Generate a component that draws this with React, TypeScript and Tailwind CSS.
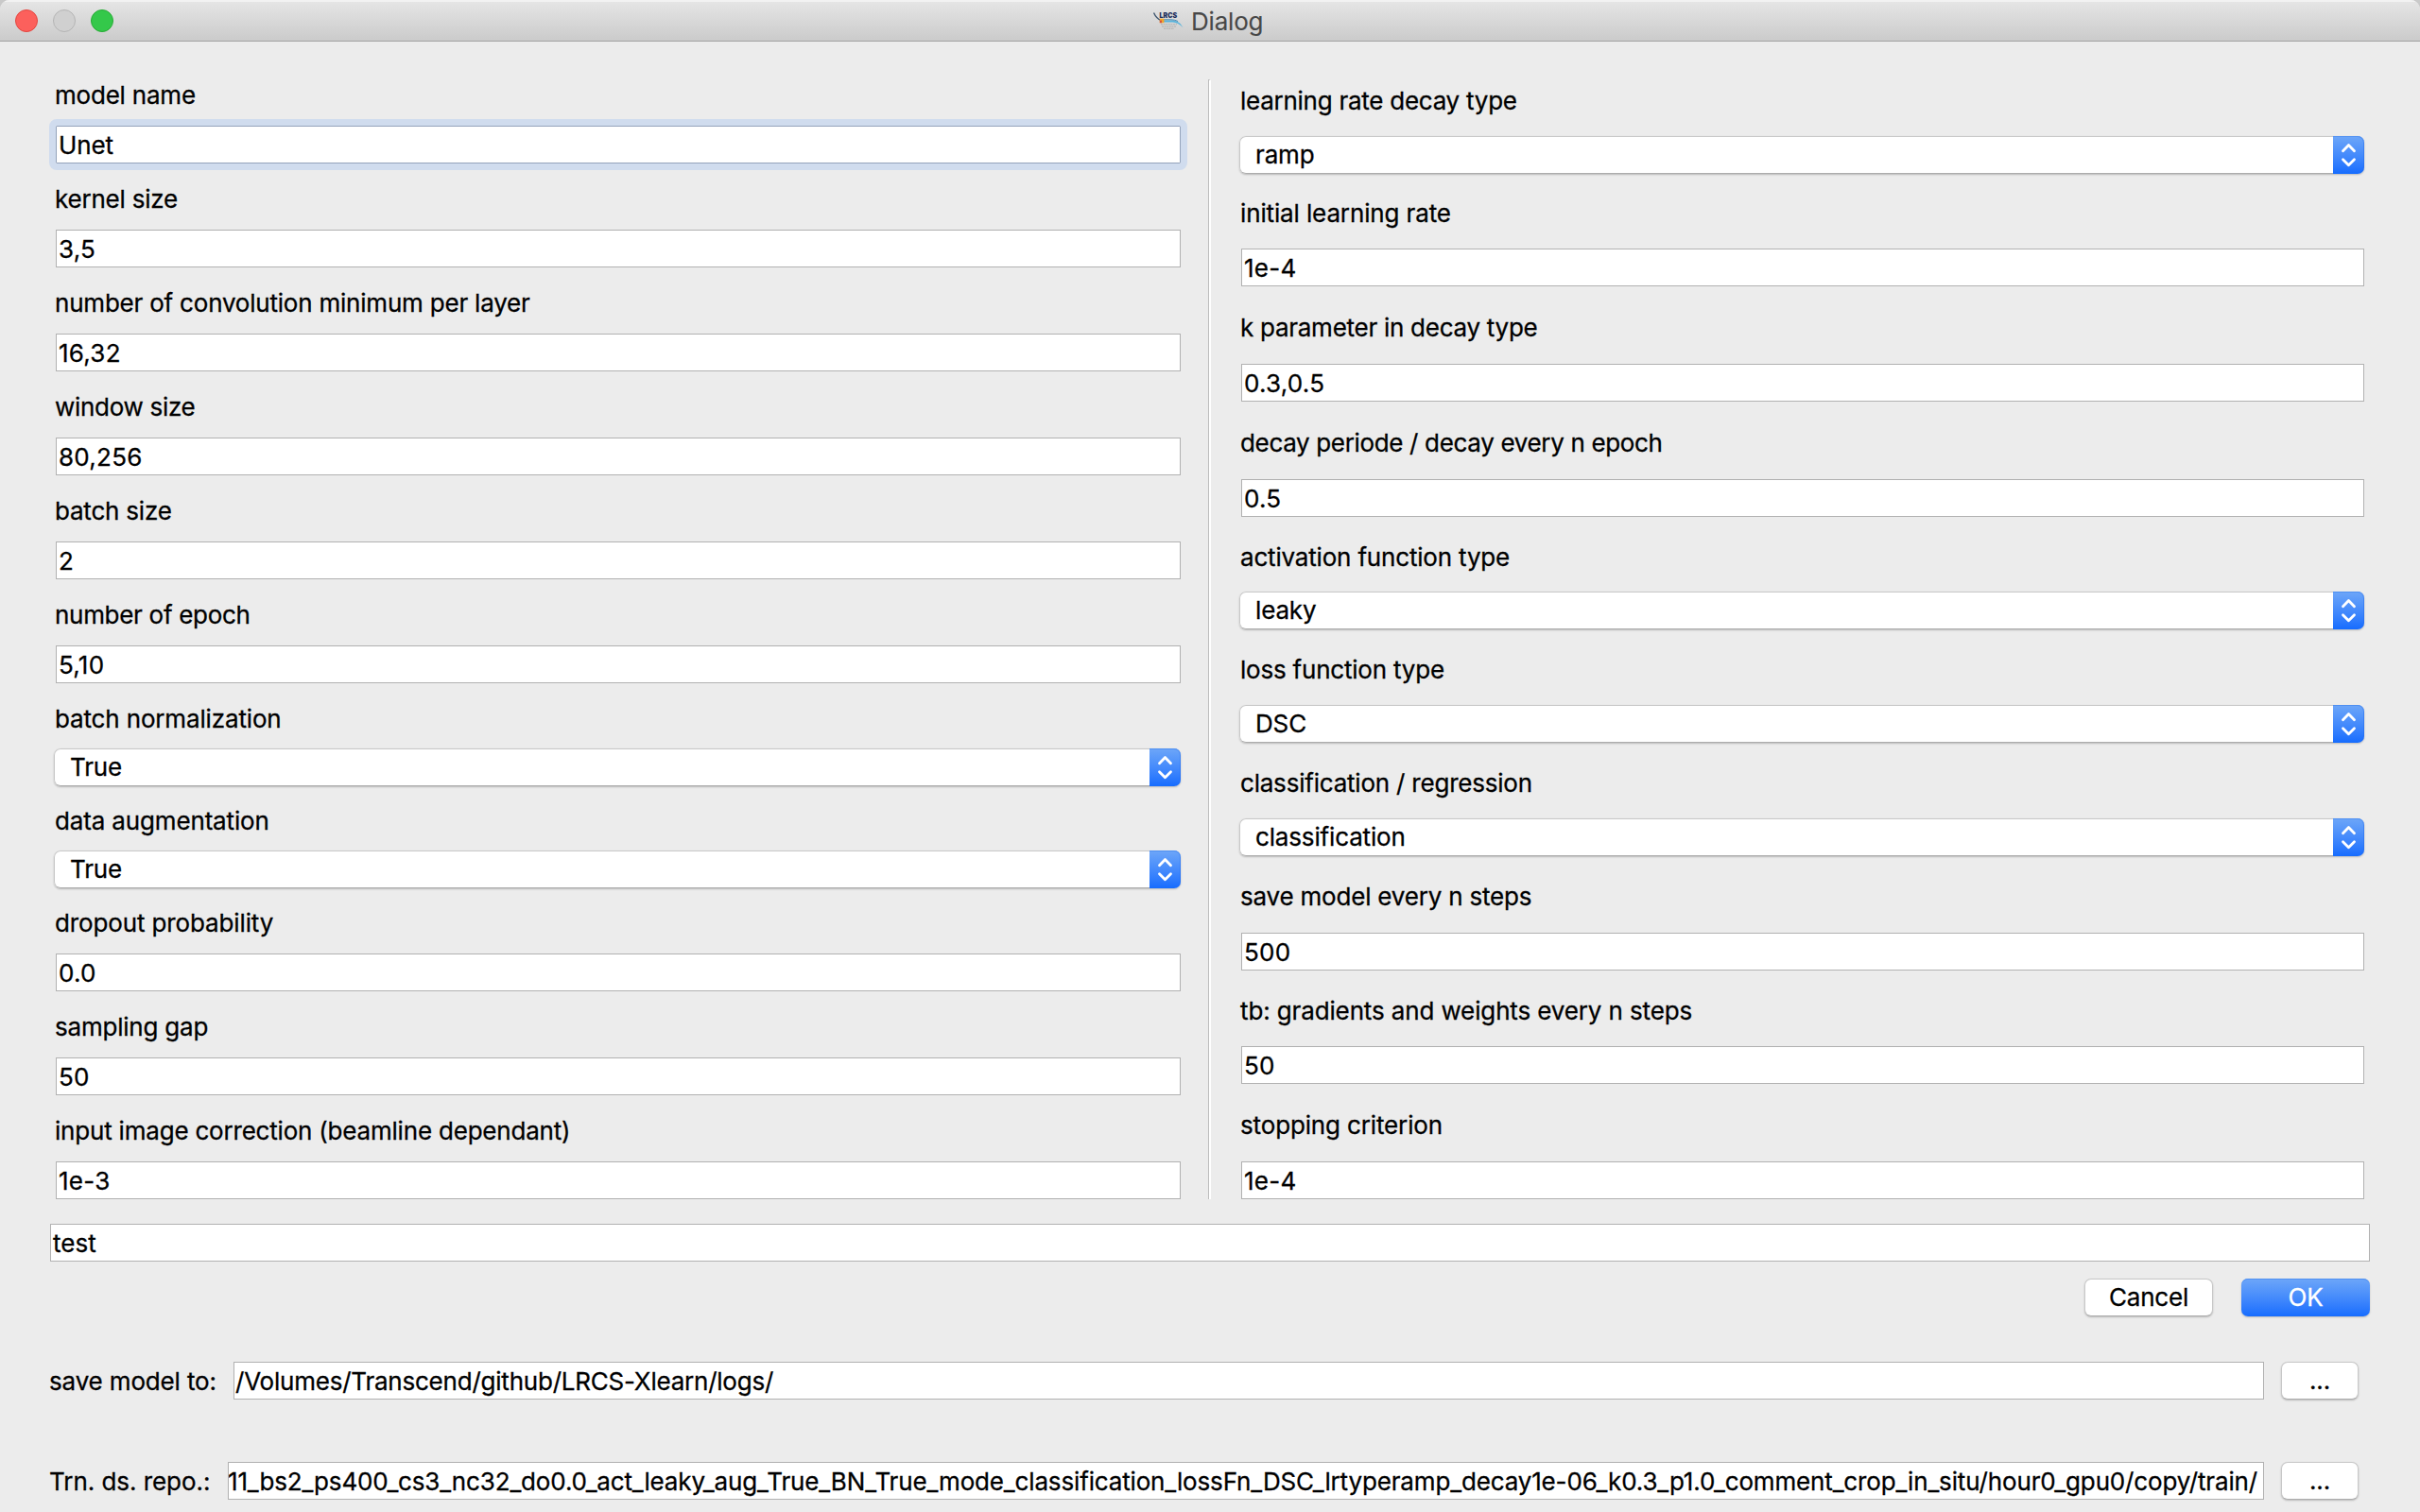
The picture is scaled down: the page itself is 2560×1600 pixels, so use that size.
import type { ReactNode } from "react";

type FieldProps = {
  label: string;
  value: string;
  kind?: "input" | "select";
  /** Spacing above the label. */
  above?: string;
  /** Spacing between label and control. */
  between?: string;
  labelTracking?: string;
  focused?: boolean;
};

function TextInput({ children, className = "" }: { children: ReactNode; className?: string }) {
  return (
    <div
      className={`h-10 overflow-hidden border bg-white pt-1 leading-8 whitespace-nowrap ${className}`}
    >
      {children}
    </div>
  );
}

function Select({ value }: { value: string }) {
  return (
    <div className="-ml-0.5 flex h-10 rounded-[7px] bg-white tracking-[-0.15px] shadow-[0_1px_2px_rgba(0,0,0,0.22)]">
      <div className="flex-1 rounded-l-[7px] border border-r-0 border-[#c8c8c8] border-b-[#acacac] pt-[3px] pl-4 leading-8">
        {value}
      </div>
      <div className="h-10 w-[33px] rounded-r-[7px] bg-linear-to-b from-[#6da6f8] to-[#156cfe] shadow-[inset_0_1px_0_#4f90f2,inset_-1px_0_0_rgba(30,105,235,0.45)]">
        <svg width="33" height="40" viewBox="0 0 33 40" fill="none" stroke="white" strokeWidth="2.8" strokeLinecap="round" strokeLinejoin="round">
          <path d="M10.5 15.7 16.5 9.6 22.5 15.7" />
          <path d="M10.5 24.7 16.5 30.8 22.5 24.7" />
        </svg>
      </div>
    </div>
  );
}

function Field({
  label,
  value,
  kind = "input",
  above = "",
  between = "mt-4",
  labelTracking = "tracking-[-0.21px]",
  focused = false,
}: FieldProps) {
  return (
    <div className={above}>
      <div className={`-ml-px h-8 leading-8 whitespace-nowrap ${labelTracking}`}>{label}</div>
      <div className={between}>
        {kind === "select" ? (
          <Select value={value} />
        ) : (
          <TextInput
            className={
              focused
                ? "rounded-[1px] border-[#94a3bb] pl-0.5 tracking-[-0.15px] outline-[7px] outline-[#d0dcee]"
                : "border-[#b1b1b1] pl-0.5 tracking-[0.25px]"
            }
          >
            {value}
          </TextInput>
        )}
      </div>
    </div>
  );
}

const leftFields: FieldProps[] = [
  { label: "model name", value: "Unet", focused: true },
  { label: "kernel size", value: "3,5", above: "mt-[22px]" },
  { label: "number of convolution minimum per layer", value: "16,32", above: "mt-[22px]" },
  { label: "window size", value: "80,256", above: "mt-[22px]", labelTracking: "tracking-[-0.3px]" },
  { label: "batch size", value: "2", above: "mt-[22px]" },
  { label: "number of epoch", value: "5,10", above: "mt-[22px]", labelTracking: "tracking-[-0.3px]" },
  { label: "batch normalization", value: "True", kind: "select", above: "mt-[22px]", between: "mt-[15px]", labelTracking: "tracking-[-0.15px]" },
  { label: "data augmentation", value: "True", kind: "select", above: "mt-[21px]", between: "mt-[15px]", labelTracking: "tracking-[-0.15px]" },
  { label: "dropout probability", value: "0.0", above: "mt-[21px]", labelTracking: "tracking-[-0.13px]" },
  { label: "sampling gap", value: "50", above: "mt-[22px]" },
  { label: "input image correction (beamline dependant)", value: "1e-3", above: "mt-[22px]", labelTracking: "tracking-[-0.2px]" },
];

const rightFields: FieldProps[] = [
  { label: "learning rate decay type", value: "ramp", kind: "select", between: "mt-[21px]", labelTracking: "tracking-[-0.26px]" },
  { label: "initial learning rate", value: "1e-4", above: "mt-[26px]", between: "mt-[21px]", labelTracking: "tracking-[-0.13px]" },
  { label: "k parameter in decay type", value: "0.3,0.5", above: "mt-7", between: "mt-[22px]", labelTracking: "tracking-[-0.27px]" },
  { label: "decay periode / decay every n epoch", value: "0.5", above: "mt-7", between: "mt-[22px]", labelTracking: "tracking-[-0.34px]" },
  { label: "activation function type", value: "leaky", kind: "select", above: "mt-[27px]", between: "mt-5", labelTracking: "tracking-[-0.18px]" },
  { label: "loss function type", value: "DSC", kind: "select", above: "mt-[27px]", between: "mt-[21px]" },
  { label: "classification / regression", value: "classification", kind: "select", above: "mt-[27px]", between: "mt-[21px]" },
  { label: "save model every n steps", value: "500", above: "mt-[27px]", between: "mt-[22px]", labelTracking: "tracking-[-0.2px]" },
  { label: "tb: gradients and weights every n steps", value: "50", above: "mt-[27px]", between: "mt-[21px]", labelTracking: "tracking-[-0.13px]" },
  { label: "stopping criterion", value: "1e-4", above: "mt-7", between: "mt-[22px]", labelTracking: "tracking-[-0.14px]" },
];

function Logo() {
  return (
    <svg width="32" height="20" viewBox="0 0 32 20" fill="none">
      <path d="M0.5 1.5C2 5 4.5 8 8 9.5" stroke="#3c536c" strokeWidth="1.4" />
      <text x="6.6" y="6.8" fontFamily="Inter, sans-serif" fontSize="7.6" fontWeight="900" fill="#1c2f5c" textLength="18.6" lengthAdjust="spacingAndGlyphs" letterSpacing="0">LRCS</text>
      <path d="M11 9.4H18C25 9.4 29 12 31.5 17.5C28 13.2 24 11.6 18 11.6H11Z" fill="#58b4dc" />
      <path d="M11 8.8H18C21 8.8 24 9.4 26 10.6" stroke="#3a7fae" strokeWidth="0.9" />
      <rect x="6.8" y="7.6" width="4.6" height="4.6" fill="#f0a62c" />
      <rect x="6.8" y="9.6" width="2.2" height="2.6" fill="#d9503c" />
      <path d="M8 13.8H25M9 16H24M11 18.2H22" stroke="#a3a3a3" strokeWidth="1.1" strokeDasharray="2 0.6" opacity="0.75" />
    </svg>
  );
}

function PushButton({ children, className = "" }: { children: ReactNode; className?: string }) {
  return (
    <button
      className={`block h-10 rounded-[7px] border border-[#c8c8c8] border-b-[#acacac] bg-white pt-[3px] pb-[3px] text-center leading-8 shadow-[0_1px_2px_rgba(0,0,0,0.22)] ${className}`}
    >
      {children}
    </button>
  );
}

export default function App() {
  return (
    <div className="h-[1600px] w-[2560px] overflow-hidden bg-[#c9c9c9] font-['Inter',sans-serif] text-[26px] tracking-[-0.2px] text-black [-webkit-text-stroke-width:0.28px]">
      <div className="flex h-full flex-col overflow-hidden rounded-t-[10px] bg-[#ececec]">
        <header className="flex h-11 shrink-0 items-center border-b border-[#a3a3a3] bg-linear-to-b from-[#e6e6e6] to-[#cbcbcb] px-4 shadow-[inset_0_2px_0_#f2f2f2]">
          <div className="flex w-[1204px] gap-4">
            <span className="size-6 rounded-full border border-[#e2463f] bg-[#fc605c]" />
            <span className="size-6 rounded-full border border-[#b4b4b4] bg-[#d0d0d0]" />
            <span className="size-6 rounded-full border border-[#27ab35] bg-[#34c84a]" />
          </div>
          <Logo />
          <span className="ml-2 pt-0.5 leading-8 text-[#484848] [-webkit-text-stroke-width:0.1px]">Dialog</span>
        </header>

        <div className="flex h-[1225px] shrink-0">
          <section className="ml-[59px] w-[1190px] pt-[41px]">
            {leftFields.map((f) => (
              <Field key={f.label} {...f} />
            ))}
          </section>
          <div className="mt-10 ml-[29px] w-[3px] border-t border-r-2 border-l border-t-[#bdbdbd] border-r-white border-l-[#bdbdbd]" />
          <section className="ml-8 w-[1188px] pt-[47px]">
            {rightFields.map((f) => (
              <Field key={f.label} {...f} />
            ))}
          </section>
        </div>

        <footer className="pl-[53px]">
          <TextInput className="mt-[26px] w-[2454px] border-[#b1b1b1] pl-0.5 tracking-normal">test</TextInput>
          <div className="mt-[18px] flex w-[2454px] justify-end gap-[30px]">
            <PushButton className="w-[136px]">Cancel</PushButton>
            <button className="h-10 w-[136px] rounded-[7px] bg-linear-to-b from-[#6da6f8] to-[#156cfe] text-center leading-8 text-white shadow-[inset_0_1px_0_#4f90f2,0_1px_2px_rgba(0,0,0,0.22)]">
              OK
            </button>
          </div>
          <div className="mt-12 flex">
            <div className="-ml-px w-[195px] pt-[5px] leading-8 tracking-[-0.15px]">save model to:</div>
            <TextInput className="w-[2148px] border-[#b1b1b1] pl-px tracking-[-0.22px]">/Volumes/Transcend/github/LRCS-Xlearn/logs/</TextInput>
            <PushButton className="ml-[18px] w-[82px]">...</PushButton>
          </div>
          <div className="mt-[66px] flex">
            <div className="-ml-px w-[189px] pt-[5px] leading-8 tracking-[-0.05px]">Trn. ds. repo.:</div>
            <TextInput className="w-[2154px] border-[#b1b1b1] tracking-[-0.15px]">
              <span className="-ml-px">
                11_bs2_ps400_cs3_nc32_do0.0_act_leaky_aug_True_BN_True_mode_classification_lossFn_DSC_lrtyperamp_decay1e-06_k0.3_p1.0_comment_crop_in_situ/hour0_gpu0/copy/train/
              </span>
            </TextInput>
            <PushButton className="ml-[18px] w-[82px]">...</PushButton>
          </div>
        </footer>
      </div>
    </div>
  );
}
